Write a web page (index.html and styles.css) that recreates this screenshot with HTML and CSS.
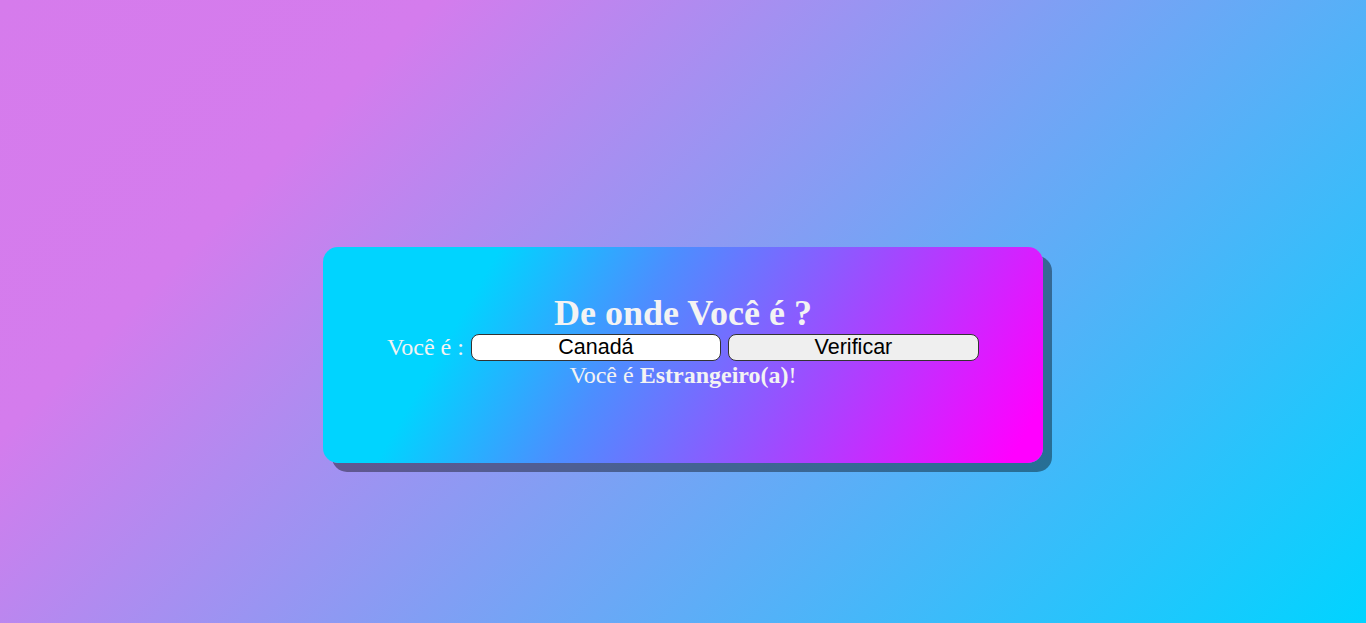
FILE: index.html
```html
<!DOCTYPE html>
<html lang="pt-BR">
<head>
<meta charset="utf-8">
<title>De onde Você é ?</title>
<link rel="stylesheet" href="styles.css">
</head>
<body>
<main class="page">
  <section class="card">
    <h1 class="title">De onde Você é ?</h1>
    <div class="row">
      <label class="label" for="pais">Você é :</label>
      <input class="field" id="pais" type="text" value="Canadá">
      <button class="btn" type="button">Verificar</button>
    </div>
    <p class="result">Você é <strong>Estrangeiro(a)</strong>!</p>
  </section>
</main>
</body>
</html>
```

FILE: styles.css
```css
html, body {
  margin: 0;
  padding: 0;
  height: 100%;
}

body {
  background: linear-gradient(135deg, #d67bec 0%, #d47ced 22%, #00d4ff 100%);
  font-family: "Liberation Serif", "Times New Roman", serif;
  overflow: hidden;
}

.page {
  display: flex;
  flex-direction: column;
  align-items: center;
  padding-top: 247px;
  box-sizing: border-box;
  height: 100%;
}

.card {
  width: 720px;
  height: 216px;
  box-sizing: border-box;
  padding-top: 48px;
  border-radius: 15px;
  background: linear-gradient(120deg, #00d4ff 0%, #00d4ff 21%, #4c8eff 42%, #a149ff 68%, #ff00ff 96%);
  box-shadow: 9px 9px 0 rgba(0, 0, 0, 0.4);
  color: #f3f3f3;
  text-align: center;
}

.title {
  margin: 0;
  font-size: 36px;
  line-height: 36px;
  font-weight: bold;
}

.row {
  margin-top: 3px;
  display: flex;
  justify-content: center;
  align-items: center;
  gap: 7px;
  height: 27px;
}

.label {
  font-size: 24px;
  line-height: 27px;
}

.field,
.btn {
  width: 251px;
  height: 27px;
  box-sizing: border-box;
  margin: 0;
  padding: 0 4px;
  border: 1px solid #333;
  border-radius: 8px;
  font-family: "Liberation Sans", Arial, sans-serif;
  font-size: 21.5px;
  color: #000;
  text-align: center;
}

.field {
  width: 250px;
  background: #fff;
  outline: none;
}

.btn {
  background: #efefef;
}

.result {
  margin: 2px 0 0;
  font-size: 24px;
  line-height: 24px;
}
```
